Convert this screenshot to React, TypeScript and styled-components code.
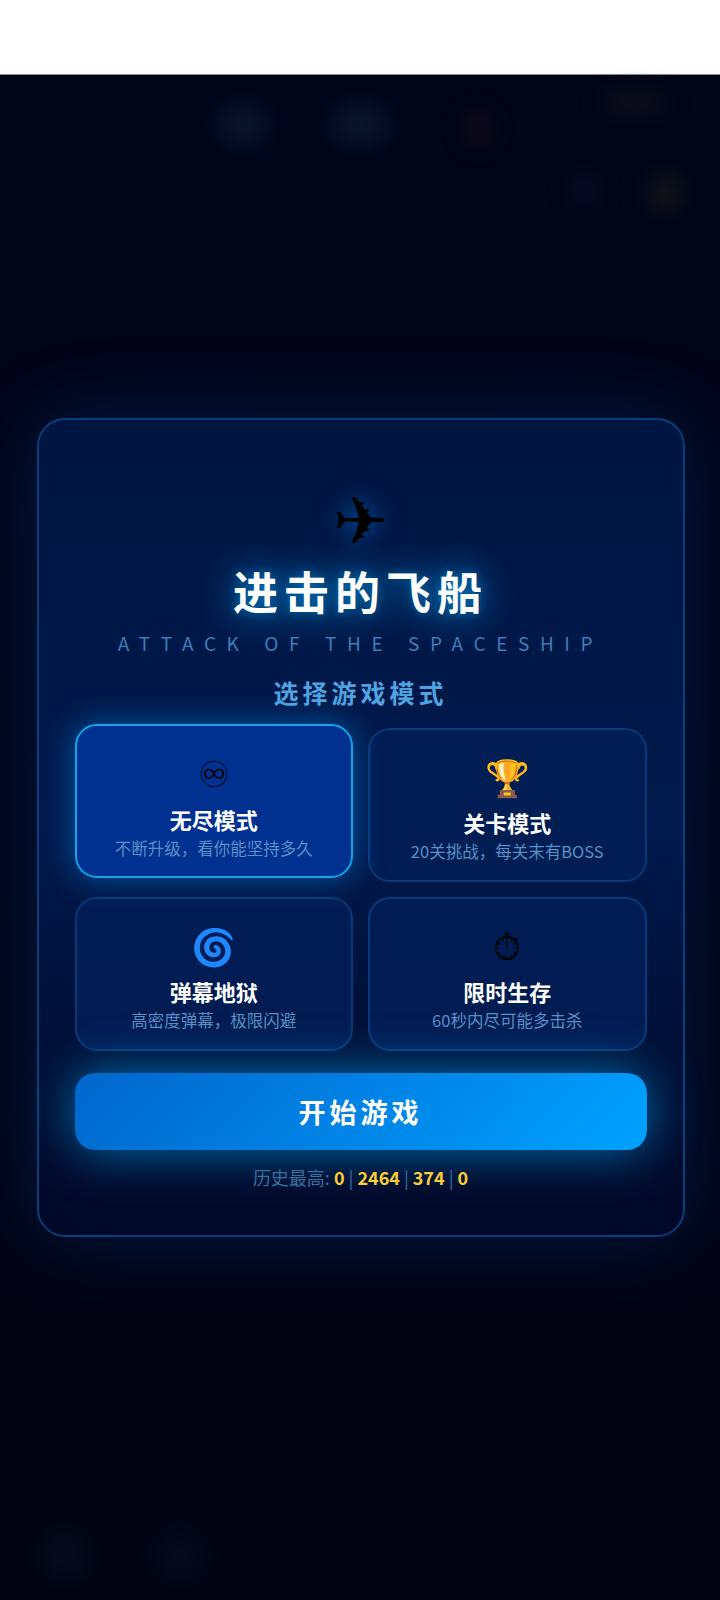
import React from 'react';
import styled, { createGlobalStyle } from 'styled-components';

type Mode = {
  icon: string;
  title: string;
  desc: string;
  selected?: boolean;
};

const MODES: Mode[] = [
  { icon: '♾', title: '无尽模式', desc: '不断升级，看你能坚持多久', selected: true },
  { icon: '🏆', title: '关卡模式', desc: '20关挑战，每关末有BOSS' },
  { icon: '🌀', title: '弹幕地狱', desc: '高密度弹幕，极限闪避' },
  { icon: '⏱', title: '限时生存', desc: '60秒内尽可能多击杀' },
];

const SCORES = ['0', '2464', '374', '0'];

export default function App() {
  return (
    <Page>
      <GlobalStyle />
      <TopBar />
      <Stage>
        <Blob $x={218} $y={105} $w={50} $h={40} $color="#1a3044" />
        <Blob $x={330} $y={105} $w={60} $h={40} $color="#1a3044" />
        <Blob $x={465} $y={112} $w={26} $h={34} $color="#34141c" />
        <Blob $x={600} $y={90} $w={70} $h={24} $color="#241c14" />
        <Blob $x={570} $y={175} $w={30} $h={30} $color="#1a1c34" />
        <Blob $x={650} $y={175} $w={30} $h={36} $color="#3c3018" />
        <Blob $x={40} $y={1530} $w={50} $h={50} $color="#12142a" />
        <Blob $x={155} $y={1530} $w={50} $h={50} $color="#10122e" />
        <Modal>
          <PlaneIcon>✈</PlaneIcon>
          <Title>进击的飞船</Title>
          <Subtitle>ATTACK OF THE SPACESHIP</Subtitle>
          <SectionLabel>选择游戏模式</SectionLabel>
          <ModeGrid>
            {MODES.map((mode) => (
              <ModeCard key={mode.title} $selected={mode.selected}>
                <ModeIcon>{mode.icon}</ModeIcon>
                <ModeTitle $selected={mode.selected}>{mode.title}</ModeTitle>
                <ModeDesc>{mode.desc}</ModeDesc>
              </ModeCard>
            ))}
          </ModeGrid>
          <StartButton>开始游戏</StartButton>
          <Scores>
            历史最高:
            {SCORES.map((score, i) => (
              <React.Fragment key={i}>
                {i > 0 && <Divider>|</Divider>}
                <Score>{score}</Score>
              </React.Fragment>
            ))}
          </Scores>
        </Modal>
      </Stage>
    </Page>
  );
}

const GlobalStyle = createGlobalStyle`
  * {
    box-sizing: border-box;
  }
  html,
  body {
    margin: 0;
    padding: 0;
    background: #ffffff;
  }
`;

const Page = styled.div`
  width: 720px;
  height: 1600px;
  display: flex;
  flex-direction: column;
  overflow: hidden;
  font-family: 'Noto Sans CJK SC', 'Noto Sans', sans-serif;
`;

const TopBar = styled.div`
  height: 75px;
  flex-shrink: 0;
  background: #ffffff;
  border-bottom: 1px solid #8a8a8a;
`;

const Stage = styled.div`
  position: relative;
  flex: 1;
  display: flex;
  justify-content: center;
  align-items: flex-start;
  padding: 343px 0 0 1px;
  background: linear-gradient(180deg, #000518 0%, #000412 100%);
`;

const Blob = styled.div<{ $x: number; $y: number; $w: number; $h: number; $color: string }>`
  position: absolute;
  left: ${(p) => p.$x}px;
  top: ${(p) => p.$y - 75}px;
  width: ${(p) => p.$w}px;
  height: ${(p) => p.$h}px;
  border-radius: 50%;
  background: ${(p) => p.$color};
  filter: blur(12px);
  opacity: 0.4;
`;

const Modal = styled.div`
  position: relative;
  width: 648px;
  height: 819px;
  padding: 62px 36px 0;
  display: flex;
  flex-direction: column;
  align-items: center;
  border: 2px solid #083f7a;
  border-radius: 28px;
  background: linear-gradient(180deg, #001540 0%, #001a4d 50%, #000c2e 85%, #000828 100%);
  box-shadow: 0 0 80px rgba(0, 90, 220, 0.24);
`;

const PlaneIcon = styled.div`
  height: 66px;
  font-size: 66px;
  line-height: 66px;
  color: #000000;
  text-shadow: 0 0 22px rgba(0, 140, 255, 0.6);
`;

const Title = styled.h1`
  margin: 15px 0 0;
  font-size: 45px;
  line-height: 56px;
  font-weight: 700;
  letter-spacing: 6px;
  color: #ffffff;
  text-shadow: 0 0 36px rgba(0, 170, 255, 0.9), 0 0 10px rgba(0, 170, 255, 0.4);
`;

const Subtitle = styled.div`
  margin-top: 11px;
  font-size: 19px;
  line-height: 26px;
  letter-spacing: 10.6px;
  color: #3d7db8;
  white-space: nowrap;
`;

const SectionLabel = styled.div`
  margin-top: 19px;
  font-size: 25px;
  line-height: 34px;
  font-weight: 700;
  letter-spacing: 4px;
  color: #4fa3e0;
`;

const ModeGrid = styled.div`
  margin-top: 19px;
  width: 100%;
  display: grid;
  grid-template-columns: 1fr 1fr;
  gap: 15px;
`;

const ModeCard = styled.div<{ $selected?: boolean }>`
  height: 154px;
  padding-top: 23px;
  display: flex;
  flex-direction: column;
  align-items: center;
  border-radius: 22px;
  border: 2px solid ${(p) => (p.$selected ? '#10a4e8' : '#073a78')};
  background: ${(p) => (p.$selected ? '#003090' : 'rgba(0, 30, 85, 0.9)')};
  box-shadow: ${(p) => (p.$selected ? '0 0 30px rgba(0, 150, 255, 0.5)' : 'none')};
  transform: ${(p) => (p.$selected ? 'translateY(-4px)' : 'none')};
`;

const ModeIcon = styled.div`
  height: 44px;
  font-size: 36px;
  line-height: 44px;
  color: #000000;
`;

const ModeTitle = styled.div<{ $selected?: boolean }>`
  margin-top: ${(p) => (p.$selected ? 11 : 10)}px;
  font-size: 22px;
  line-height: 30px;
  font-weight: 700;
  color: #ffffff;
`;

const ModeDesc = styled.div`
  margin-top: 1px;
  font-size: 16.5px;
  line-height: 26px;
  color: #5c8fc6;
`;

const StartButton = styled.button`
  margin-top: 22px;
  width: 100%;
  height: 77px;
  border: none;
  border-radius: 20px;
  font-family: inherit;
  font-size: 27px;
  font-weight: 700;
  letter-spacing: 4px;
  color: #ffffff;
  background: linear-gradient(135deg, #0066cc 0%, #00a2ff 100%);
  box-shadow: 0 0 50px rgba(0, 170, 255, 0.65);
`;

const Scores = styled.div`
  margin-top: 12px;
  display: flex;
  align-items: center;
  gap: 4px;
  font-size: 18px;
  line-height: 30px;
  color: #3b6f9e;
`;

const Score = styled.span`
  font-weight: 700;
  color: #ffcc33;
`;

const Divider = styled.span`
  color: #3b6f9e;
  font-weight: 400;
`;
